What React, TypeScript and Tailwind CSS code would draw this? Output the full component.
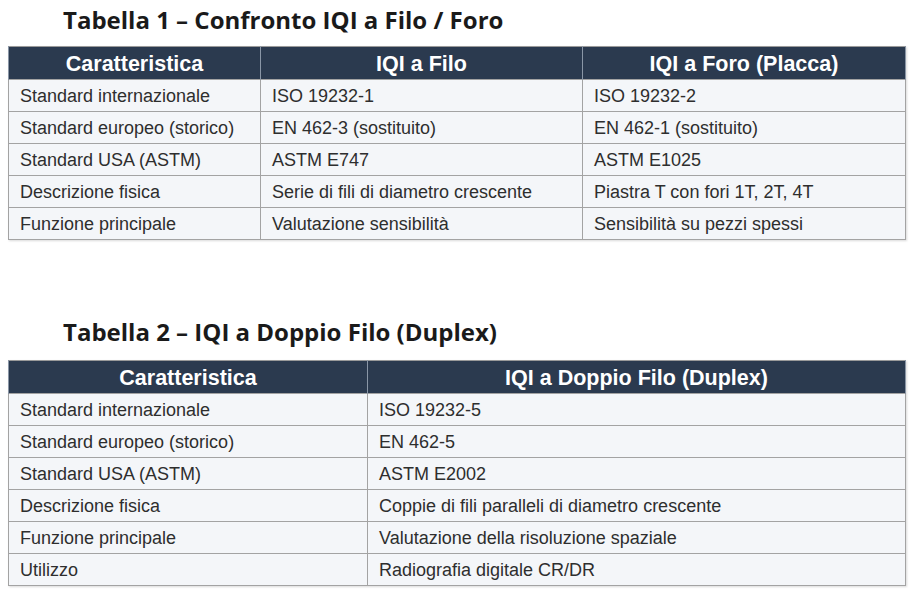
const table1 = {
  head: ['Caratteristica', 'IQI a Filo', 'IQI a Foro (Placca)'],
  widths: ['w-[252px]', 'w-[322px]', 'w-[323px]'],
  rows: [
    ['Standard internazionale', 'ISO 19232-1', 'ISO 19232-2'],
    ['Standard europeo (storico)', 'EN 462-3 (sostituito)', 'EN 462-1 (sostituito)'],
    ['Standard USA (ASTM)', 'ASTM E747', 'ASTM E1025'],
    ['Descrizione fisica', 'Serie di fili di diametro crescente', 'Piastra T con fori 1T, 2T, 4T'],
    ['Funzione principale', 'Valutazione sensibilità', 'Sensibilità su pezzi spessi'],
  ],
}

const table2 = {
  head: ['Caratteristica', 'IQI a Doppio Filo (Duplex)'],
  widths: ['w-[359px]', 'w-[538px]'],
  rows: [
    ['Standard internazionale', 'ISO 19232-5'],
    ['Standard europeo (storico)', 'EN 462-5'],
    ['Standard USA (ASTM)', 'ASTM E2002'],
    ['Descrizione fisica', 'Coppie di fili paralleli di diametro crescente'],
    ['Funzione principale', 'Valutazione della risoluzione spaziale'],
    ['Utilizzo', 'Radiografia digitale CR/DR'],
  ],
}

function DataTable({ head, widths, rows }: { head: string[]; widths: string[]; rows: string[][] }) {
  return (
    <table className="w-[897px] table-fixed border-collapse border border-[#9a9a9a] shadow-[1px_1px_2px_rgba(0,0,0,0.15)]">
      <thead>
        <tr className="h-[33px] bg-[#2b3a4f]">
          {head.map((h, i) => (
            <th
              key={h}
              className={`${widths[i]} border-x border-[#8a96a6] pt-[3px] text-center text-[21.5px] font-bold leading-none text-white`}
            >
              {h}
            </th>
          ))}
        </tr>
      </thead>
      <tbody>
        {rows.map((row) => (
          <tr key={row[0]} className="h-[32px] bg-[#f4f6f9]">
            {row.map((cell, i) => (
              <td
                key={i}
                className="border border-[#a3a3a3] px-[11px] pt-[1px] text-left text-[18px] leading-none text-[#2e2e2e]"
              >
                {cell}
              </td>
            ))}
          </tr>
        ))}
      </tbody>
    </table>
  )
}

export default function App() {
  return (
    <div className="w-[914px] h-[592px] bg-white pl-2 font-['Liberation_Sans',Arial,sans-serif]">
      {/* Tabella 1 */}
      <h2 className="pl-[55px] pt-[6px] h-[46px] font-['Open_Sans',sans-serif] text-[24px] font-bold leading-[28px] text-[#1a1a1a]">
        Tabella 1 – Confronto IQI a Filo / Foro
      </h2>
      <DataTable {...table1} />

      {/* Tabella 2 */}
      <h2 className="mt-[77px] pl-[55px] pt-[1px] h-[43px] font-['Open_Sans',sans-serif] text-[24px] font-bold leading-[28px] text-[#1a1a1a]">
        Tabella 2 – IQI a Doppio Filo (Duplex)
      </h2>
      <DataTable {...table2} />
    </div>
  )
}
